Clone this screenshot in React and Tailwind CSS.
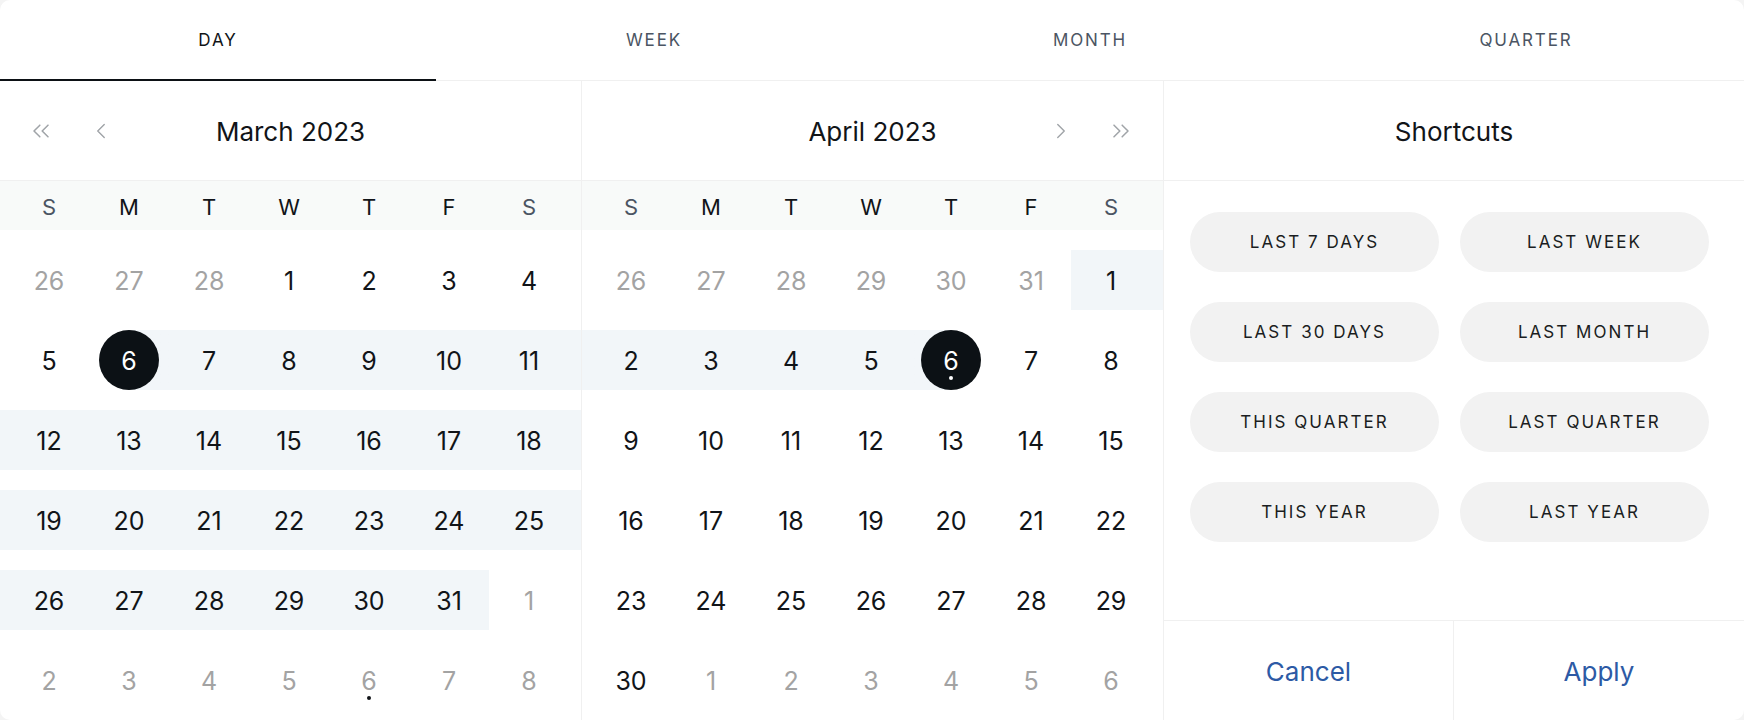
import React, { useState } from "react";
import { ChevronLeft, ChevronRight, ChevronsLeft, ChevronsRight } from "lucide-react";

const FONT = { fontFamily: "Inter, 'Noto Sans', sans-serif" };

const tabs = ["Day", "Week", "Month", "Quarter"];
const weekdays = ["S", "M", "T", "W", "T", "F", "S"];

// helpers to build rows
const m = (d) => ({ d, muted: true });
const n = (d) => ({ d });
const b = (d) => ({ d, band: "full" });

const march = [
    [m(26), m(27), m(28), n(1), n(2), n(3), n(4)],
    [n(5), { d: 6, selected: true, band: "start" }, b(7), b(8), b(9), b(10), b(11)],
    [b(12), b(13), b(14), b(15), b(16), b(17), b(18)],
    [b(19), b(20), b(21), b(22), b(23), b(24), b(25)],
    [b(26), b(27), b(28), b(29), b(30), b(31), m(1)],
    [m(2), m(3), m(4), m(5), { d: 6, muted: true, today: true }, m(7), m(8)],
];

const april = [
    [m(26), m(27), m(28), m(29), m(30), m(31), b(1)],
    [b(2), b(3), b(4), b(5), { d: 6, selected: true, today: true, band: "end" }, n(7), n(8)],
    [n(9), n(10), n(11), n(12), n(13), n(14), n(15)],
    [n(16), n(17), n(18), n(19), n(20), n(21), n(22)],
    [n(23), n(24), n(25), n(26), n(27), n(28), n(29)],
    [n(30), m(1), m(2), m(3), m(4), m(5), m(6)],
];

const shortcuts = [
    "Last 7 days", "Last week",
    "Last 30 days", "Last month",
    "This quarter", "Last quarter",
    "This year", "Last year",
];

const DayCell = ({ day, col }) => {
    const pad = col === 0 ? "pl-[9px]" : col === 6 ? "pr-[12px]" : "";
    let bg = "";
    if (day.band === "full") bg = "bg-[#f2f6f9]";
    if (day.band === "start") bg = "bg-linear-to-r from-transparent from-50% to-[#f2f6f9] to-50%";
    if (day.band === "end") bg = "bg-linear-to-l from-transparent from-50% to-[#f2f6f9] to-50%";

    return (
        <div className={`${pad} ${bg}`}>
            <div className="w-20 h-[60px] flex items-center justify-center">
                <div
                    className={`relative w-[60px] h-[60px] pt-[4px] rounded-full flex items-center justify-center text-[25px] ${
                        day.selected ? "bg-[#0c1115] text-white" : day.muted ? "text-[#a3a3a3]" : "text-[#111418]"
                    }`}
                >
                    {day.d}
                    {day.today && (
                        <span
                            className={`absolute top-[46px] left-[28px] w-[4px] h-[4px] rounded-full ${
                                day.selected ? "bg-white" : "bg-[#111418]"
                            }`}
                        />
                    )}
                </div>
            </div>
        </div>
    );
};

const Calendar = ({ title, rows, side }) => (
    <div className="w-[582px] border-r border-[#f0f0f0] flex flex-col">
        <div className="h-[100px] border-b border-[#f0f0f0] flex items-center">
            <div className="w-[130px] flex items-center gap-[33px] pl-[27px] text-[#a0a4a8]">
                {side === "left" && (
                    <>
                        <ChevronsLeft size={28} strokeWidth={1.3} />
                        <ChevronLeft size={26} strokeWidth={1.3} />
                    </>
                )}
            </div>
            <div className="flex-1 text-center text-[26px] pt-[2px] text-[#111418]">{title}</div>
            <div className="w-[130px] flex items-center justify-end gap-[33px] pr-[28px] text-[#a0a4a8]">
                {side === "right" && (
                    <>
                        <ChevronRight size={26} strokeWidth={1.3} />
                        <ChevronsRight size={28} strokeWidth={1.3} />
                    </>
                )}
            </div>
        </div>
        <div className="h-[49px] pt-[4px] bg-[#f8faf9] flex pl-[9px] pr-[12px] items-center">
            {weekdays.map((w, i) => (
                <div
                    key={i}
                    className={`w-20 text-center text-[22px] ${i === 0 || i === 6 ? "text-[#4b5563]" : "text-[#111418]"}`}
                >
                    {w}
                </div>
            ))}
        </div>
        <div className="pt-[10px]">
            {rows.map((row, r) => (
                <div key={r} className="flex py-[10px]">
                    {row.map((day, c) => (
                        <DayCell key={c} day={day} col={c} />
                    ))}
                </div>
            ))}
        </div>
    </div>
);

const App = () => {
    const [tab, setTab] = useState("Day");

    return (
        <div className="min-h-screen bg-[#f4f4f4]" style={FONT}>
            <div className="w-[1744px] h-[720px] bg-white rounded-[10px] overflow-hidden flex flex-col">
                {/* Tabs */}
                <div className="flex border-b border-[#f0f0f0]">
                    {tabs.map((t) => (
                        <button
                            key={t}
                            onClick={() => setTab(t)}
                            className={`flex-1 h-[81px] pt-[2px] -mb-px border-b-2 flex items-center justify-center text-[17px] uppercase tracking-[0.11em] ${
                                tab === t ? "border-[#0c1115] text-[#111418]" : "border-transparent text-[#4b5563]"
                            }`}
                        >
                            {t}
                        </button>
                    ))}
                </div>

                <div className="flex flex-1">
                    <Calendar title="March 2023" rows={march} side="left" />
                    <Calendar title="April 2023" rows={april} side="right" />

                    {/* Shortcuts */}
                    <div className="flex-1 flex flex-col">
                        <div className="h-[100px] pt-[2px] border-b border-[#f0f0f0] flex items-center justify-center text-[26px] text-[#111418]">
                            Shortcuts
                        </div>
                        <div className="grid grid-cols-2 gap-x-[21px] gap-y-[30px] pt-[31px] pl-[26px] pr-[35px]">
                            {shortcuts.map((s) => (
                                <button
                                    key={s}
                                    className="h-[60px] pt-[2px] rounded-full bg-[#f2f2f2] text-[17px] uppercase tracking-[0.12em] text-[#1a1d21]"
                                >
                                    {s}
                                </button>
                            ))}
                        </div>
                        <div className="flex-1" />
                        <div className="h-[100px] border-t border-[#f0f0f0] grid grid-cols-2 divide-x divide-[#f0f0f0]">
                            <button className="flex items-center justify-center pt-[2px] text-[26px] text-[#2d5aa5]">Cancel</button>
                            <button className="flex items-center justify-center pt-[2px] text-[26px] text-[#2d5aa5]">Apply</button>
                        </div>
                    </div>
                </div>
            </div>
        </div>
    );
};

export default App;
